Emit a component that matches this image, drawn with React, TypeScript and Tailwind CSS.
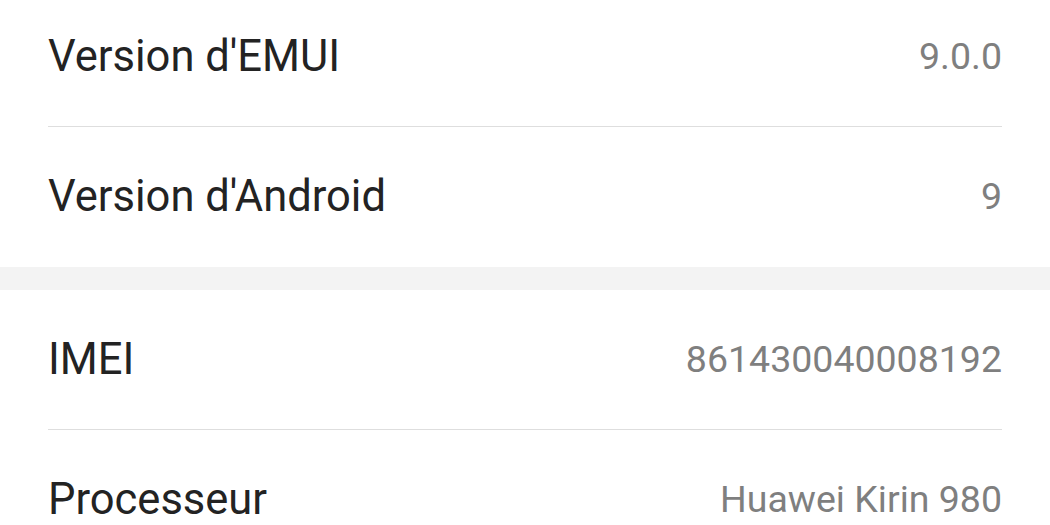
const ROWS = [
  { label: "Version d'EMUI", value: "9.0.0" },
  { label: "Version d'Android", value: "9" },
];

const ROWS_2 = [
  { label: "IMEI", value: "861430040008192" },
  { label: "Processeur", value: "Huawei Kirin 980" },
];

function Row({ label, value, last }: { label: string; value: string; last?: boolean }) {
  return (
    <div
      className={`mx-12 h-[140px] flex items-center justify-between ${
        last ? "" : "border-b border-[#dedede]"
      }`}
    >
      <span className="text-[43.5px] leading-none text-[#232323]">{label}</span>
      <span className="text-[37.5px] leading-none text-[#7f7f7f]">{value}</span>
    </div>
  );
}

export default function App() {
  return (
    <div
      className="w-[1050px] h-[525px] overflow-hidden bg-white"
      style={{ fontFamily: "Roboto, 'Noto Sans', sans-serif" }}
    >
      <div className="-mt-[13px]">
        {/* first group */}
        {ROWS.map((r, i) => (
          <Row key={r.label} label={r.label} value={r.value} last={i === ROWS.length - 1} />
        ))}

        {/* group separator */}
        <div className="h-[23px] bg-[#f3f3f3]"></div>

        {/* second group */}
        {ROWS_2.map((r, i) => (
          <Row key={r.label} label={r.label} value={r.value} last={i === ROWS_2.length - 1} />
        ))}
      </div>
    </div>
  );
}
